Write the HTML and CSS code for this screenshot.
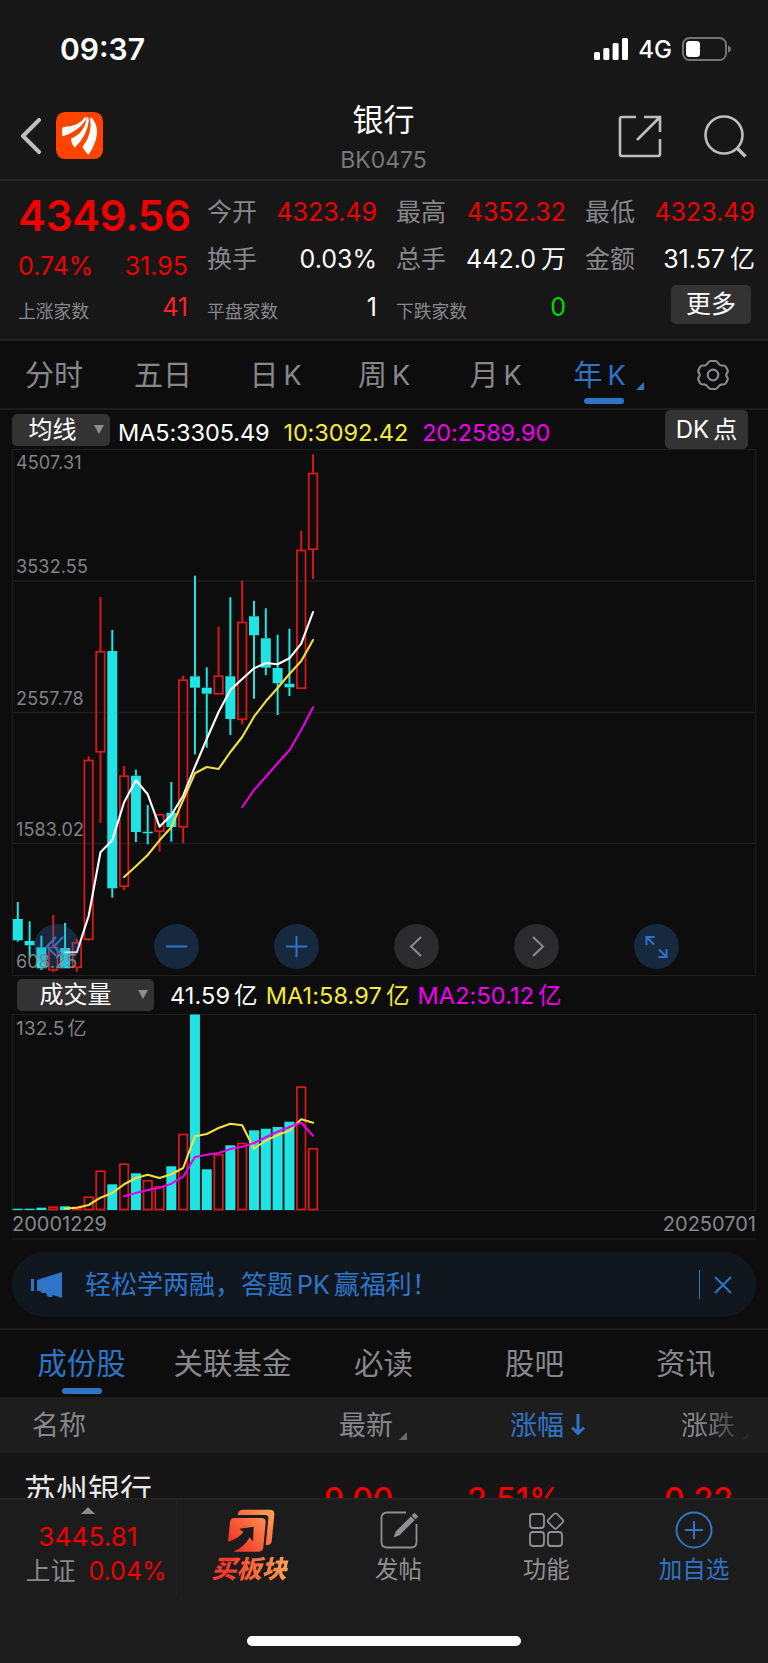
FILE: index.html
```html
<!DOCTYPE html>
<html lang="zh-CN">

<head>
    <meta charset="UTF-8">
    <meta name="viewport" content="width=device-width, initial-scale=1.0">
    <title>银行 BK0475</title>
    <link rel="stylesheet" href="styles.css">
</head>

<body>
    <!-- 状态栏 -->
    <div class="status-bar">
        <span class="time">09:37</span>
        <div class="status-right">
            <svg class="signal" width="34" height="22" viewBox="0 0 34 22" fill="#fff">
                <rect x="0" y="14" width="6" height="8" rx="1.5" />
                <rect x="9.3" y="10" width="6" height="12" rx="1.5" />
                <rect x="18.6" y="5" width="6" height="17" rx="1.5" />
                <rect x="28" y="0" width="6" height="22" rx="1.5" />
            </svg>
            <span class="network">4G</span>
            <svg width="50" height="24" viewBox="0 0 50 24">
                <rect x="1" y="1" width="43" height="22" rx="6.5" fill="none" stroke="#747474" stroke-width="2" />
                <rect x="4" y="4" width="14" height="16" rx="3.5" fill="#fff" />
                <path d="M46 8.5q3 1 3 3.5t-3 3.5z" fill="#747474" />
            </svg>
        </div>
    </div>

    <!-- 标题 -->
    <header class="header">
        <div class="header-side">
            <svg width="22" height="36" viewBox="0 0 22 36" fill="none" stroke="#bebebe" stroke-width="4" stroke-linecap="round" stroke-linejoin="round">
                <path d="M19 2L3 18l16 16" />
            </svg>
            <svg class="logo" width="47" height="47" viewBox="0 0 142 142">
                <rect width="142" height="142" rx="27" fill="#ff4400" />
                <g fill="#fff">
                    <path d="M20 46Q70 44 88 14Q94 18 88 27Q66 59 19 74Q17 56 20 46Z" />
                    <path d="M46 80Q88 62 93 15Q100 15 99 27Q94 72 56 108Q45 93 46 80Z" />
                    <path d="M80 106Q111 68 103 16Q111 18 114 26Q140 66 98 130Q87 119 80 106Z" />
                </g>
            </svg>
        </div>
        <div class="header-title">
            <h1>银行</h1>
            <p>BK0475</p>
        </div>
        <div class="header-side header-actions">
            <svg width="44" height="44" viewBox="0 0 44 44" fill="none" stroke="#bebebe" stroke-width="2.6">
                <path d="M18 3H4Q2 3 2 5v35q0 2 2 2h36q2 0 2-2V25M26 3h16v15M42 3L19 26" />
            </svg>
            <svg width="44" height="44" viewBox="0 0 44 44" fill="none" stroke="#bebebe" stroke-width="2.6">
                <circle cx="21" cy="21" r="18.5" />
                <path d="M34 34l8.500 8.500" stroke-width="3.400" />
            </svg>
        </div>
    </header>

    <!-- 行情 -->
    <section class="quote">
        <div class="quote-col quote-main">
            <div class="price">4349.56</div>
            <div class="item change"><span class="red">0.74%</span><span class="red">31.95</span></div>
            <div class="item small"><label>上涨家数</label><span class="red light">41</span></div>
        </div>
        <div class="quote-col">
            <div class="item"><label>今开</label><span class="red">4323.49</span></div>
            <div class="item"><label>换手</label><span>0.03%</span></div>
            <div class="item small"><label>平盘家数</label><span>1</span></div>
        </div>
        <div class="quote-col">
            <div class="item"><label>最高</label><span class="red">4352.32</span></div>
            <div class="item"><label>总手</label><span>442.0<i>万</i></span></div>
            <div class="item small"><label>下跌家数</label><span class="green">0</span></div>
        </div>
        <div class="quote-col">
            <div class="item"><label>最低</label><span class="red">4323.49</span></div>
            <div class="item"><label>金额</label><span>31.57<i>亿</i></span></div>
            <button class="more">更多</button>
        </div>
    </section>

    <!-- 周期 -->
    <nav class="period">
        <a>分时</a>
        <a>五日</a>
        <a>日<b>K</b></a>
        <a>周<b>K</b></a>
        <a>月<b>K</b></a>
        <a class="active">年<b>K</b></a>
        <a class="setting">
            <svg width="32" height="30" viewBox="0 0 32 30" fill="none" stroke="#87878c" stroke-width="2.200" stroke-linejoin="round">
                <path d="M10.500 3.500Q12 1 14 1h4q2 0 3.500 2.500t4.500 2q2-.2 3 1.500l1.500 3q.7 1.600-.6 3.200t0 3.600q1.300 1.600.6 3.200l-1.500 3q-1 1.700-3 1.500-3-.500-4.500 2T18 29h-4q-2 0-3.500-2.500t-4.500-2q-2 .2-3-1.500L1.500 20q-.7-1.600.6-3.200t0-3.600Q.8 11.600 1.500 10L3 7q1-1.700 3-1.500 3 .5 4.500-2z" />
                <circle cx="16" cy="15" r="5.300" />
            </svg>
        </a>
    </nav>

    <!-- K线 -->
    <div class="chart-bar">
        <button class="select">均线</button>
        <span class="ma5">MA5:3305.49</span>
        <span class="yellow">10:3092.42</span>
        <span class="magenta">20:2589.90</span>
        <button class="dk">DK<i>点</i></button>
    </div>
    <div class="kline">
        <svg id="kline" width="744" height="527"></svg>
        <div class="tools">
            <span class="tool"><svg viewBox="0 0 45 45"><path d="M22 13L13 22.500l9 9.500M29 13l-9 9.500 9 9.500" /></svg></span>
            <span class="tool"><svg viewBox="0 0 45 45"><path d="M12 22.500h21" /></svg></span>
            <span class="tool"><svg viewBox="0 0 45 45"><path d="M12 22.500h21M22.500 12v21" /></svg></span>
            <span class="tool gray"><svg viewBox="0 0 45 45"><path d="M27 13l-10 9.500L27 32" /></svg></span>
            <span class="tool gray"><svg viewBox="0 0 45 45"><path d="M19 13l10 9.500L19 32" /></svg></span>
            <span class="tool"><svg viewBox="0 0 45 45"><path d="M12.500 21v-8h8M13 13.500l7 7M24.500 33h8v-8M32 32.500l-7-7" /></svg></span>
        </div>
        <span class="axis">4507.31</span>
        <span class="axis">3532.55</span>
        <span class="axis">2557.78</span>
        <span class="axis">1583.02</span>
        <span class="axis">608.25</span>
    </div>

    <!-- 成交量 -->
    <div class="chart-bar volume-bar">
        <button class="select">成交量</button>
        <span>41.59<i>亿</i></span>
        <span class="yellow">MA1:58.97<i>亿</i></span>
        <span class="magenta">MA2:50.12<i>亿</i></span>
    </div>
    <div class="volume">
        <svg id="volume" width="744" height="197"></svg>
        <span class="axis">132.5<i>亿</i></span>
    </div>
    <div class="dates"><span>20001229</span><span>20250701</span></div>

    <!-- 公告 -->
    <div class="notice">
        <svg width="32" height="28" viewBox="0 0 32 28" fill="#2f74c6">
            <path d="M0 8h3v12H0zM6 9L31 1v26l-9-3-1 2h-3l-2-1-1-3h-4l-2-2H6z" />
        </svg>
        <span class="notice-text">轻松学两融，答题<b>PK</b>赢福利！</span>
        <span class="notice-close">
            <svg width="18" height="18" viewBox="0 0 18 18" stroke="#2f74c6" stroke-width="2"><path d="M1 1l16 16M17 1L1 17" /></svg>
        </span>
    </div>

    <nav class="tabs">
        <a class="active">成份股</a>
        <a>关联基金</a>
        <a>必读</a>
        <a>股吧</a>
        <a>资讯</a>
    </nav>

    <!-- 成份股列表 -->
    <div class="list">
        <div class="list-row list-head">
            <span>名称</span>
            <span class="sort">最新</span>
            <span class="sort-down">涨幅<svg width="14" height="22" viewBox="0 0 14 22" fill="none" stroke="#2f74c6" stroke-width="3"><path d="M7 0v19M1 13.500l6 6 6-6" /></svg></span>
            <span class="sort fade">涨跌</span>
        </div>
        <div class="list-row list-item">
            <span>苏州银行</span>
            <span>9.00</span>
            <span>2.51%</span>
            <span>0.22</span>
        </div>
    </div>

    <!-- 底部栏 -->
    <footer class="footer">
        <div class="footer-bar">
            <div class="index">
                <div class="index-arrow"></div>
                <div class="index-price">3445.81</div>
                <div class="index-name">上证<span>0.04%</span></div>
            </div>
            <div class="action buy">
                <svg width="48" height="43" viewBox="82 25 144 129">
                    <defs>
                        <linearGradient id="fire" x1="84" y1="150" x2="224" y2="30" gradientUnits="userSpaceOnUse">
                            <stop offset="0.150" stop-color="#f6392b" />
                            <stop offset="1" stop-color="#ffa558" />
                        </linearGradient>
                    </defs>
                    <g fill="url(#fire)">
                        <path d="M114 43Q116 27 130 27h80q15 0 14 15l-8 80q-1 12-18 12l8-80q1-11-10-11z" />
                        <path d="M104 52h82q13 0 12 13l-7 75q-1 13-14 13h-76q34-14 49-43l10 13 2-45-42 6 11 11Q115 115 85 123l6-58q1-13 13-13z" />
                    </g>
                </svg>
                <span>买板块</span>
            </div>
            <div class="action">
                <svg width="38" height="38" viewBox="0 0 38 38" fill="none" stroke="#909094" stroke-width="1.800">
                    <path d="M26 1.500H7Q1.500 1.500 1.500 7v24q0 5.500 5.500 5.500h24q5.500 0 5.500-5.500V13" />
                    <path d="M15 25l1.500-4L31 6.500l2.500 2.500L19 23.500zM33 4.500l1.500-1.500 2.500 2.500L35.500 7z" fill="#909094" />
                </svg>
                <span>发帖</span>
            </div>
            <div class="action">
                <svg width="38" height="38" viewBox="0 0 38 38" fill="none" stroke="#909094" stroke-width="1.800">
                    <rect x="3" y="3" width="14" height="14" rx="3" />
                    <rect x="3" y="21" width="14" height="14" rx="3" />
                    <rect x="21" y="21" width="14" height="14" rx="3" />
                    <rect x="22.500" y="4" width="12" height="12" rx="2" transform="rotate(45 28.500 10)" />
                </svg>
                <span>功能</span>
            </div>
            <div class="action blue">
                <svg width="38" height="38" viewBox="0 0 38 38" fill="none" stroke="#2f74c6" stroke-width="2">
                    <circle cx="19" cy="19" r="17.500" />
                    <path d="M10 19h18M19 10v18" />
                </svg>
                <span>加自选</span>
            </div>
        </div>
        <div class="home-indicator"></div>
    </footer>

    <script src="script.js"></script>
</body>

</html>
```

FILE: styles.css
```css
* {
    box-sizing: border-box;
}

body {
    margin: 0;
    width: 768px;
    height: 1663px;
    overflow: hidden;
    background-color: #0d0d0d;
    color: #fff;
    font-family: Inter, "Noto Sans CJK SC", sans-serif;
    font-size: 25px;
    line-height: 1;
}

h1,
p {
    margin: 0;
    font-weight: 400;
}

i,
b {
    font-style: normal;
    font-weight: 400;
}

svg {
    display: block;
    flex: none;
}

button {
    border: none;
    padding: 0;
    background-color: #333;
    color: #fff;
    font-family: inherit;
    line-height: 1;
    border-radius: 5px;
}

.red {
    color: #f00000;
}

.green {
    color: #00d800;
}

.yellow {
    color: #f5e83c;
}

.magenta {
    color: #f000f0;
}

/* 状态栏 */
.status-bar {
    display: flex;
    justify-content: space-between;
    align-items: center;
    height: 98px;
    padding: 0 36px 0 60px;
    background-color: #171717;
}

.time {
    font-size: 30px;
    font-weight: 600;
}

.status-right {
    display: flex;
    align-items: center;
}

.network {
    margin: 2px 10px 0 10px;
    font-size: 24px;
    font-weight: 500;
}

/* 标题 */
.header {
    display: flex;
    justify-content: space-between;
    height: 83px;
    padding: 0 21px 0 20px;
    background-color: #171717;
    border-bottom: 2px solid #242424;
}

.header-side {
    display: flex;
    align-items: center;
    width: 130px;
    height: 75px;
    gap: 14px;
}

.header-actions {
    justify-content: flex-end;
    gap: 41px;
}

.header-title {
    text-align: center;
}

.header-title h1 {
    margin-top: 6px;
    font-size: 31px;
}

.header-title p {
    margin-top: 14px;
    font-size: 23px;
    color: #77777c;
}

/* 行情 */
.quote {
    display: grid;
    grid-template-columns: repeat(4, 170px);
    column-gap: 19px;
    height: 160px;
    padding: 8px 0 0 18px;
    background-color: #171717;
    border-bottom: 2px solid #232323;
}

.price {
    height: 55px;
    line-height: 54px;
    font-size: 42px;
    font-weight: 600;
    letter-spacing: -0.3px;
    color: #f00000;
}

.item {
    display: flex;
    justify-content: space-between;
    align-items: center;
    height: 47px;
}

.item label {
    color: #87878c;
}

.item i,
.chart-bar i {
    margin-left: 5px;
}

.change {
    height: 45px;
}

.small {
    height: 49px;
}

.small label {
    margin-top: 8px;
    font-size: 17.8px;
}

.quote-main .small {
    height: 37px;
}

.light {
    color: #ff2222;
}

.more {
    display: block;
    width: 80px;
    height: 39px;
    margin: 2px 0 0 86px;
    font-size: 25px;
}

/* 周期 */
.period {
    display: grid;
    grid-template-columns: 108px 110px 115px 102px 121px 87px 140px;
    height: 69px;
    padding-top: 1px;
    border-bottom: 2px solid #1c1c1c;
    font-size: 29px;
    color: #87878c;
}

.period a {
    position: relative;
    display: flex;
    justify-content: center;
    align-items: center;
}

.period b {
    margin-left: 5px;
    font-size: 27px;
}

.active {
    color: #2f74c6;
}

.active::after {
    content: "";
    position: absolute;
    bottom: 4px;
    left: calc(50% - 16px);
    width: 40px;
    height: 6px;
    border-radius: 3px;
    background-color: #2f74c6;
}

.period .active::before {
    content: "";
    position: absolute;
    right: -1px;
    bottom: 18px;
    border-left: 8px solid transparent;
    border-bottom: 8px solid #2f74c6;
}

/* K线 */
.chart-bar {
    display: flex;
    align-items: center;
    height: 39px;
    padding: 0 20px 0 12px;
    font-size: 23.500px;
}

.chart-bar span {
    margin-top: 6px;
    margin-right: 14px;
    letter-spacing: -0.1px;
}

.select {
    position: relative;
    width: 98px;
    height: 32px;
    margin-right: 8px;
    padding-right: 17px;
    font-size: 24px;
}

.select::after {
    content: "";
    position: absolute;
    right: 6px;
    top: 11px;
    border: 5px solid transparent;
    border-top: 9px solid #8d8d92;
    border-bottom: none;
}

.dk {
    width: 83px;
    height: 39px;
    margin-left: auto;
    font-size: 24px;
}

.dk i {
    margin-left: 4px;
}

.kline,
.volume {
    position: relative;
    height: 527px;
    margin: 0 12px;
}

.axis {
    position: absolute;
    left: 4px;
    top: 5px;
    font-size: 18px;
    letter-spacing: 0.15px;
    color: #828287;
}

.axis:nth-of-type(2) {
    top: 109px;
}

.axis:nth-of-type(3) {
    top: 241px;
}

.axis:nth-of-type(4) {
    top: 372px;
}

.axis:nth-of-type(5) {
    top: 504px;
}

.tools {
    position: absolute;
    left: 22px;
    bottom: 7px;
    display: flex;
    gap: 75px;
}

.tool {
    width: 45px;
    height: 45px;
    border-radius: 50%;
    background-color: rgba(47, 115, 195, 0.28);
}

.tool svg {
    fill: none;
    stroke: #2f74c6;
    stroke-width: 2;
}

.gray {
    background-color: #2b2b2d;
}

.gray svg {
    stroke: #8c8c90;
}

/* 成交量 */
.volume-bar {
    height: 38px;
    padding-left: 17px;
}

.volume-bar .select {
    width: 137px;
    margin-right: 16px;
    padding-right: 20px;
}

.volume-bar span {
    margin-top: 2px;
    margin-right: 8px;
    letter-spacing: 0.1px;
}

.volume-bar i {
    margin-left: 4px;
}

.volume {
    height: 197px;
}

.volume .axis {
    font-size: 19px;
}

.volume .axis i {
    margin-left: 3px;
}

.dates {
    display: flex;
    justify-content: space-between;
    height: 29px;
    margin: 0 12px;
    padding-top: 3px;
    border-bottom: 2px solid #171717;
    font-size: 20px;
    color: #87878c;
}

/* 公告 */
.notice {
    display: flex;
    align-items: center;
    height: 65px;
    margin: 12px 12px 11px;
    padding: 0 24px 0 19px;
    border-radius: 33px;
    background-color: #10171f;
    font-size: 26px;
    color: #2f74c6;
}

.notice-text {
    margin-left: 22px;
}

.notice b {
    margin: 0 4px;
    font-size: 25px;
}

.notice-close {
    display: flex;
    align-items: center;
    height: 29px;
    margin-left: auto;
    padding-left: 14px;
    border-left: 1px solid #2f74c6;
}

.tabs {
    display: grid;
    grid-template-columns: repeat(5, 151px);
    height: 69px;
    padding: 0 6px;
    border-top: 2px solid #1c1c1c;
    font-size: 29.500px;
    color: #87878c;
}

.tabs a {
    position: relative;
    display: flex;
    justify-content: center;
    align-items: center;
}

.tabs .active::after {
    bottom: 3px;
    left: calc(50% - 20px);
}

/* 成份股列表 */
.list {
    height: 101px;
    overflow: hidden;
    background-color: #161616;
}

.list-row {
    display: grid;
    align-items: center;
}

.list-head {
    grid-template-columns: 307px 171px 171px 1fr;
    height: 56px;
    padding-left: 32px;
    background-color: #1d1d1d;
    font-size: 27px;
    color: #87878c;
}

.sort::after {
    content: "";
    display: inline-block;
    margin-left: 6px;
    margin-bottom: -5px;
    border-left: 8px solid transparent;
    border-bottom: 8px solid #6b6b6f;
}

.sort-down {
    display: flex;
    align-items: center;
    gap: 7px;
    color: #2f74c6;
}

.fade {
    -webkit-mask-image: linear-gradient(to right, #000 20px, transparent 72px);
    mask-image: linear-gradient(to right, #000 20px, transparent 72px);
}

.list-item {
    grid-template-columns: 300px 143px 197px 1fr;
    height: 94px;
    padding-left: 24px;
    font-size: 32px;
    font-weight: 500;
    color: #f00000;
}

.list-item span:first-child {
    margin-top: -19px;
    font-weight: 400;
    color: #e8e8e8;
}

/* 底部栏 */
.footer {
    height: 165px;
    background-color: #1c1c1c;
    border-top: 2px solid #232323;
}

.footer-bar {
    display: grid;
    grid-template-columns: 177px repeat(4, 147.700px);
    height: 96px;
}

.index {
    display: flex;
    flex-direction: column;
    align-items: center;
    border-right: 1px solid #222;
    color: #f00000;
}

.index-arrow {
    margin-top: 7px;
    border: 7px solid transparent;
    border-top: none;
    border-bottom: 7px solid #8d8d92;
}

.index-price {
    margin-top: 10px;
    font-size: 26px;
    letter-spacing: 0.2px;
}

.index-name {
    display: flex;
    align-items: center;
    gap: 13px;
    margin: 9px 0 0 16px;
    color: #87878c;
}

.index-name span {
    color: #f00000;
}

.action {
    display: flex;
    flex-direction: column;
    align-items: center;
    padding-top: 11px;
    font-size: 23.500px;
    color: #909094;
}

.action span {
    margin-top: 9px;
}

.buy {
    padding-top: 9px;
}

.buy span {
    margin-top: 5px;
    padding-right: 3px;
    font-size: 25px;
    font-style: italic;
    font-weight: 900;
    background: linear-gradient(to right, #f6392b 20%, #ffa558);
    -webkit-background-clip: text;
    background-clip: text;
    color: transparent;
}

.blue {
    color: #2f74c6;
}

.home-indicator {
    width: 274px;
    height: 10px;
    margin: 40px auto 0;
    border-radius: 5px;
    background-color: #fff;
}
```

FILE: script.js
```js
const RED = '#d81818';
const CYAN = '#20e4e4';
const YELLOW = '#f0e040';
const MAGENTA = '#e800e8';

const START = 5.8;
const STEP = 11.81;
const BODY = 10;

// [涨跌, 最高, 实体上沿, 实体下沿, 最低]
const candles = [
    [0, 453, 470, 491.3, 492.7],
    [0, 472.3, 492, 496.3, 509],
    [0, 486.7, 498.3, 519.3, 521],
    [1, 466, 498, 521.3, 523],
    [0, 474, 499, 519.3, 519.3],
    [1, 489.7, 493.3, 518.7, 522.7],
    [1, 307.3, 311, 490.7, 491.7],
    [1, 148, 202.3, 303.3, 374],
    [0, 181, 202, 439.3, 448.7],
    [1, 317, 326.7, 437.7, 441.3],
    [0, 320.7, 326.7, 383, 393],
    [0, 356, 382.7, 384.3, 395.3],
    [1, 365.3, 365.3, 382.7, 402.7],
    [0, 333, 363.7, 378, 392.7],
    [1, 226.7, 230.7, 378.3, 394.3],
    [0, 126.7, 227.3, 238.7, 305.3],
    [0, 218.3, 238.7, 244.7, 298.7],
    [1, 177.7, 226.7, 245.3, 245.3],
    [0, 148.3, 227.3, 270, 286],
    [1, 131.7, 173, 270.7, 275.3],
    [0, 151.7, 167.3, 186.3, 249.7],
    [0, 159.3, 189.3, 218.7, 226.3],
    [0, 185.7, 219, 234.3, 266],
    [0, 179.7, 234.7, 238.3, 247],
    [1, 81.7, 101, 239.7, 239.7],
    [1, 5.3, 24, 100.7, 130]
];

const ma5 = [503.3, 503.3, 467, 403.3, 391.3, 353.3, 331.3, 345.3, 377.7, 366, 346.7, 317.7, 290, 263, 241, 230, 219.3, 214, 215.3, 209.3, 194.7, 163];
const ma10 = [428, 417.3, 406, 391.3, 378.3, 351, 324.3, 318, 320, 303, 288, 267.7, 252.3, 239, 225, 212, 191];
const ma20 = [358, 341, 327.7, 314.3, 301.3, 281, 258.3];

// 成交量柱顶
const volumes = [194.7, 194.7, 193.7, 192.7, 192.3, 193, 182.7, 156.7, 170.3, 149.7, 159.3, 166.3, 172.3, 152.3, 120, 0.5, 155.3, 140.3, 131.3, 129, 116.3, 114.7, 113, 107.7, 72.7, 134.3];
const volMa1 = [194.5, 193.7, 191, 183.7, 179, 170.3, 164, 160.7, 164, 160.3, 154, 122.3, 120, 114, 109.7, 111.3, 134.7, 126.7, 121, 116.7, 105.3, 108.7];
const volMa2 = [182.3, 179, 176, 173.7, 169.7, 162.7, 143, 140.7, 139, 135, 132.7, 129, 123.3, 117.7, 113, 108.7, 121.7];

// 成交量里按阳线画的柱子
const volumeUp = [3, 5, 6, 7, 9, 11, 12, 14, 17, 19, 24, 25];

function x(i) {
    return START + i * STEP;
}

function add(svg, name, attrs) {
    const el = document.createElementNS('http://www.w3.org/2000/svg', name);
    for (const key in attrs) {
        el.setAttribute(key, attrs[key]);
    }
    svg.appendChild(el);
}

function line(svg, x1, y1, x2, y2, color, width) {
    add(svg, 'line', { x1, y1, x2, y2, stroke: color, 'stroke-width': width });
}

function bar(svg, i, up, top, bottom) {
    if (up) {
        add(svg, 'rect', { x: x(i) - BODY / 2 + 0.75, y: top + 0.5, width: BODY - 1.5, height: Math.max(bottom - top - 1, 1), fill: 'none', stroke: RED, 'stroke-width': 1.8 });
    } else {
        add(svg, 'rect', { x: x(i) - BODY / 2, y: top, width: BODY, height: bottom - top, fill: CYAN });
    }
}

// 均线从 K 线右端对齐
function average(svg, values, color) {
    const first = candles.length - values.length;
    const points = values.map((v, i) => x(first + i) + ',' + v).join(' ');
    add(svg, 'polyline', { points, fill: 'none', stroke: color, 'stroke-width': 2.1, 'stroke-linejoin': 'round', 'stroke-linecap': 'round' });
}

const kline = document.getElementById('kline');
[132, 263.5, 394.5].forEach(y => line(kline, 0, y, 744, y, '#1e1e1e', 1.5));
add(kline, 'rect', { x: 0.5, y: 0.5, width: 743, height: 526, fill: 'none', stroke: '#1e1e1e' });
candles.forEach(([up, high, top, bottom, low], i) => {
    const color = up ? RED : CYAN;
    line(kline, x(i), high, x(i), top, color, 2);
    line(kline, x(i), bottom, x(i), low, color, 2);
    bar(kline, i, up, top, bottom);
});
average(kline, ma5, '#fff');
average(kline, ma10, YELLOW);
average(kline, ma20, MAGENTA);

const volume = document.getElementById('volume');
add(volume, 'rect', { x: 0.5, y: 0.5, width: 743, height: 196, fill: 'none', stroke: '#1e1e1e' });
volumes.forEach((top, i) => bar(volume, i, volumeUp.includes(i), top, 196));
average(volume, volMa1, YELLOW);
average(volume, volMa2, MAGENTA);
```
